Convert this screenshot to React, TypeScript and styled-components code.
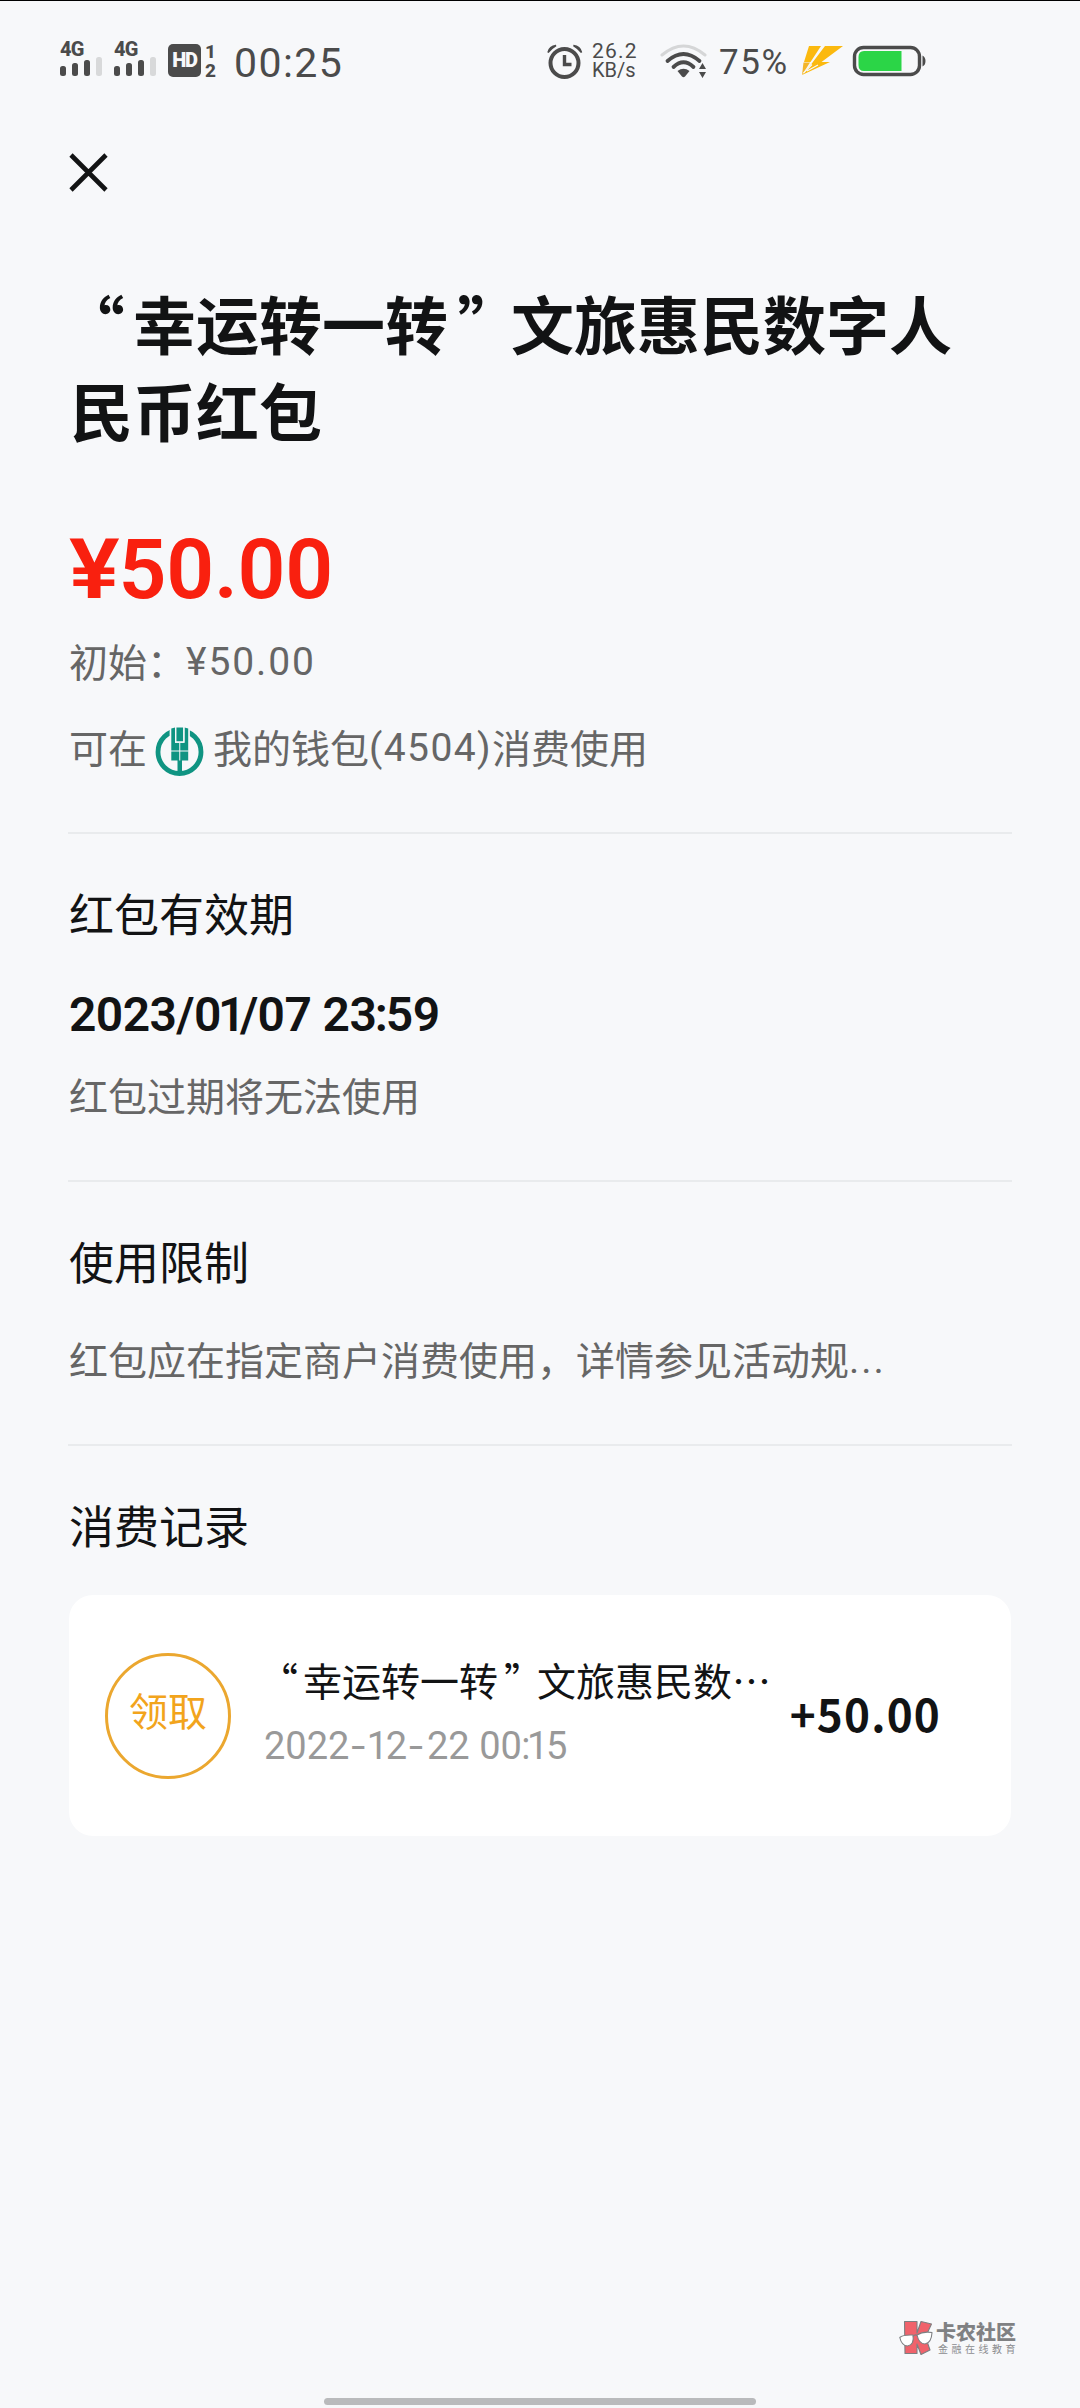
import React from "react";
import styled, { createGlobalStyle } from "styled-components";

const CJK = `"Noto Sans CJK SC", "Noto Sans", sans-serif`;
const MIXED = `Roboto, "Noto Sans CJK SC", sans-serif`;

const Global = createGlobalStyle`
  *, *::before, *::after { box-sizing: border-box; }
  body { margin: 0; background: #f7f8fa; }
`;

const Screen = styled.div`
  width: 1080px;
  height: 2408px;
  display: flex;
  flex-direction: column;
  background: #f7f8fa;
  border-top: 1px solid #000;
  font-family: ${CJK};
  color: #121314;
  white-space: nowrap;
  overflow: hidden;
`;

const StatusBar = styled.header`
  height: 124px;
  padding: 0 154px 0 60px;
  display: flex;
  justify-content: space-between;
  color: #4b4b4b;
  font-family: Roboto, sans-serif;
`;

const StatusGroup = styled.div`
  display: flex;
  align-items: flex-start;
  height: 100%;
`;

const Signal = styled.div`
  width: 54px;
  padding-top: 38px;
`;

const NetLabel = styled.div`
  font-size: 20px;
  line-height: 20px;
  font-weight: 800;
  letter-spacing: -0.8px;
`;

const Bars = styled.div`
  display: flex;
  align-items: flex-end;
  gap: 6px;
  height: 17px;
`;

const Bar = styled.i<{ $h: number; $dim?: boolean }>`
  width: 6px;
  height: ${(p) => p.$h}px;
  border-radius: 2.5px;
  background: ${(p) => (p.$dim ? "#d8d9da" : "#4b4b4b")};
`;

const HdBadge = styled.div`
  margin: 43px 0 0 0;
  width: 33px;
  height: 33px;
  border-radius: 5px;
  background: #4b4b4b;
  color: #f7f8fa;
  font-size: 20px;
  line-height: 33px;
  font-weight: 900;
  letter-spacing: -1.2px;
  text-align: center;
`;

const SimStack = styled.div`
  margin: 41px 0 0 3px;
  width: 13px;
  font-size: 19px;
  line-height: 19px;
  font-weight: 800;
  text-align: center;
`;

const Clock = styled.div`
  margin: 38px 0 0 17px;
  font-size: 41px;
  line-height: 48px;
  letter-spacing: 1.4px;
`;

const Speed = styled.div`
  margin: 41px 0 0 9px;
  width: 47px;
  font-size: 20px;
  line-height: 19px;
`;

const SpeedValue = styled.div`
  font-size: 21px;
  letter-spacing: 1.2px;
`;

const Percent = styled.div`
  margin: 38px 0 0 11px;
  width: 73px;
  font-size: 35px;
  line-height: 48px;
  letter-spacing: 1.6px;
`;

const AlarmSvg = styled.svg`
  margin-top: 42px;
`;
const WifiSvg = styled.svg`
  margin: 42px 0 0 21px;
`;
const BoltSvg = styled.svg`
  margin: 44px 0 0 9px;
`;
const BatterySvg = styled.svg`
  margin: 44px 0 0 9px;
`;

const CloseButton = styled.button`
  width: 40px;
  height: 40px;
  margin: 27px 0 0 68px;
  padding: 0;
  border: 0;
  background: none;
  display: flex;
  align-items: center;
  justify-content: center;
`;

const Main = styled.main`
  margin: 86px 68px 0;
  display: flex;
  flex-direction: column;
`;

const Title = styled.h1`
  margin: 0;
  padding-left: 2px;
  width: 920px;
  font-size: 63px;
  line-height: 87px;
  font-weight: 700;
  white-space: pre-line;
`;

const Glyph = styled.span<{ $left: number; $right: number }>`
  margin-left: ${(p) => p.$left}em;
  margin-right: ${(p) => p.$right}em;
`;

const Amount = styled.div`
  margin-top: 69px;
  height: 98px;
  font-family: ${MIXED};
  font-size: 84px;
  line-height: 98px;
  font-weight: 600;
  letter-spacing: -0.3px;
  color: #f9200f;
`;

const Yen = styled.span`
  display: inline-block;
  margin: 0 5px 0 1px;
  transform: scaleX(1.13);
  transform-origin: 0 50%;
`;

const Line = styled.div<{ $top?: number }>`
  display: flex;
  align-items: center;
  height: 56px;
  margin-top: ${(p) => p.$top ?? 0}px;
  padding-left: 1px;
  font-size: 39px;
  line-height: 56px;
  color: #666;
`;

const Num = styled.span<{ $ls?: number }>`
  padding-top: 4px;
  font-family: ${MIXED};
  letter-spacing: ${(p) => p.$ls ?? 1.4}px;
`;

const BankLogo = styled.svg`
  flex: none;
  margin: 11px 9px 0 8px;
`;

const Section = styled.section<{ $top: number; $height: number }>`
  margin-top: ${(p) => p.$top}px;
  height: ${(p) => p.$height}px;
  border-top: 2px solid #e9ebed;
  padding-top: 48px;
`;

const Heading = styled.h2`
  margin: 0;
  padding-left: 1px;
  font-size: 45px;
  line-height: 62px;
  font-weight: 400;
`;

const Expiry = styled.div`
  margin-top: 43px;
  padding-left: 1px;
  height: 56px;
  font-family: ${MIXED};
  font-size: 48px;
  line-height: 56px;
  font-weight: 600;
  letter-spacing: -0.6px;
`;

const Card = styled.article`
  margin: 39px 0 0 1px;
  width: 942px;
  height: 241px;
  border-radius: 24px;
  background: #fff;
  padding: 0 70px 0 36px;
  display: flex;
  align-items: center;
`;

const Badge = styled.div`
  flex: none;
  width: 126px;
  height: 126px;
  border: 3px solid #eba72f;
  border-radius: 50%;
  color: #f2a41c;
  font-size: 39px;
  line-height: 106px;
  text-align: center;
`;

const Entry = styled.div`
  margin-left: 33px;
  height: 126px;
  width: 510px;
`;

const EntryTitle = styled.div`
  margin-top: -2px;
  font-size: 39px;
  line-height: 56px;
`;

const EntryDate = styled.div`
  margin-top: 10px;
  font-family: ${MIXED};
  font-size: 38px;
  line-height: 56px;
  color: #999;
`;

const Dash = styled.span`
  font-family: Inter, sans-serif;
  letter-spacing: 2.4px;
`;

const Delta = styled.div`
  margin: -5px 0 0 auto;
  font-size: 44px;
  line-height: 60px;
  font-weight: 700;
  letter-spacing: 1.2px;
`;

const Footer = styled.footer`
  margin-top: auto;
  display: flex;
  flex-direction: column;
  align-items: center;
`;

const Watermark = styled.div`
  align-self: flex-end;
  margin-right: 61px;
  display: flex;
  align-items: flex-start;
  gap: 3px;
  height: 38px;
`;

const WatermarkText = styled.div`
  width: 83px;
`;

const Brand = styled.div`
  font-size: 20px;
  line-height: 23px;
  font-weight: 900;
  color: #808183;
`;

const Tagline = styled.div`
  padding-left: 2px;
  font-size: 10px;
  line-height: 11px;
  letter-spacing: 3.5px;
  color: #8c8d90;
`;

const HomeBar = styled.div`
  width: 432px;
  height: 7px;
  margin: 40px 0 3px;
  border-radius: 4px;
  background: #b9babc;
`;

const SignalIcon = () => (
  <Signal>
    <NetLabel>4G</NetLabel>
    <Bars>
      <Bar $h={10} />
      <Bar $h={13} />
      <Bar $h={16} />
      <Bar $h={19} $dim />
    </Bars>
  </Signal>
);

const Alarm = () => (
  <AlarmSvg width="36" height="38" viewBox="0 0 36 38" fill="none" stroke="#4b4b4b">
    <circle cx="17.5" cy="20" r="14" strokeWidth="4" />
    <path d="M17.5 12v9.500h7" strokeWidth="3.4" />
    <path d="M1 9.500Q2.500 3 9 2.500Q4 5.500 1 9.500ZM34.500 9.500Q33 3 26.500 2.500Q31.500 5.500 34.500 9.500Z" fill="#4b4b4b" strokeWidth="1.500" />
  </AlarmSvg>
);

const Wifi = () => (
  <WifiSvg width="48" height="36" viewBox="0 0 48 36" fill="none" strokeLinecap="round">
    <path d="M2 12Q23.500-6 45 12" stroke="#d5d6d7" strokeWidth="3" />
    <path d="M7.500 18Q23.500 4 39.500 18" stroke="#4b4b4b" strokeWidth="3.800" />
    <path d="M13.500 24Q23.500 14.500 33.500 24" stroke="#4b4b4b" strokeWidth="3.800" />
    <path d="M17.500 28Q23.500 23.500 29.500 28L25 33.500Q23.500 35 22 33.500Z" fill="#4b4b4b" />
    <path d="M39 26l3.500-6 3.500 6ZM39 29l3.500 6 3.500-6Z" fill="#4b4b4b" />
  </WifiSvg>
);

const Bolt = () => (
  <BoltSvg width="42" height="31" viewBox="0 0 42 31">
    <path d="M8 1H20L9.500 17H3Z" fill="#fbb90f" />
    <path d="M24 1H42L20.500 17H29L1 30L10 19.500Z" fill="#fbb90f" />
    <path d="M2.500 17.500H9L1 30Z" fill="#f3b52a" />
    <path d="M2.500 28L11 19.500M6 26L17 20" stroke="#f7f8fa" strokeWidth="1.200" fill="none" />
  </BoltSvg>
);

const Battery = () => (
  <BatterySvg width="74" height="32" viewBox="0 0 74 32">
    <rect x="2.500" y="2.500" width="65" height="27" rx="9" fill="none" stroke="#4b4b4b" strokeWidth="3.400" />
    <path d="M49.500 6V26H12Q6.500 26 6.500 20V12Q6.500 6 12 6Z" fill="#2bd547" />
    <path d="M70.500 10.500Q73.500 12 73.500 16T70.500 21.500Z" fill="#4b4b4b" />
  </BatterySvg>
);

const Bank = () => (
  <BankLogo width="49" height="52" viewBox="0 0 49 52">
    <circle cx="24.500" cy="26" r="21.500" fill="none" stroke="#0f9482" strokeWidth="4.800" />
    <path d="M14.600 0H34.900V16H14.600Z" fill="#f7f8fa" />
    <path d="M16.300 2.500L20 1.500V16.800H29.500V1.500L33.200 2.500V34.500H27V49H22.500V34.500H16.300Z" fill="#0f9482" />
    <path d="M21.300 1.500H28.200V15.500H21.300Z" fill="#0f9482" />
    <path d="M16 25H33.500M24.750 17V34.500" stroke="#f7f8fa" strokeWidth="1" fill="none" />
    <path d="M20.600 1V16.200H28.900V1" stroke="#f7f8fa" strokeWidth="1.200" fill="none" />
  </BankLogo>
);

const KLogo = () => (
  <svg width="34" height="37" viewBox="0 0 34 37">
    <g stroke="#7d7f82" strokeWidth="1.100" strokeLinejoin="round">
      <path d="M5.500 1.500H18V13L22 1.500L32.500 4L26.500 17L31 30L22 34.500L18 24V33.500H6Z" fill="#f0626b" />
      <path d="M.8 17.500Q4 14.500 14 15Q15.500 25 8.500 26Q2.500 25.500.8 17.500Z" fill="#fff" />
      <path d="M18 15Q24 11 33 12.500Q32.500 23 26 24Q20 24 18 15Z" fill="#fff" />
      <path d="M14 16.500Q16 14 18 15.500" fill="none" />
    </g>
  </svg>
);

const Quoted = ({ children }: { children: React.ReactNode }) => (
  <>
    <Glyph $left={-0.13} $right={0.13}>“</Glyph>
    {children}
    <Glyph $left={0.15} $right={-0.15}>”</Glyph>
  </>
);

export default function App() {
  return (
    <Screen lang="zh-CN">
      <Global />
      <StatusBar>
        <StatusGroup>
          <SignalIcon />
          <SignalIcon />
          <HdBadge>HD</HdBadge>
          <SimStack>
            <div>1</div>
            <div>2</div>
          </SimStack>
          <Clock>00:25</Clock>
        </StatusGroup>
        <StatusGroup>
          <Alarm />
          <Speed>
            <SpeedValue>26.2</SpeedValue>
            <div>KB/s</div>
          </Speed>
          <Wifi />
          <Percent>75%</Percent>
          <Bolt />
          <Battery />
        </StatusGroup>
      </StatusBar>

      <CloseButton aria-label="关闭">
        <svg width="40" height="40" viewBox="0 0 40 40" stroke="#121314" strokeWidth="4.600">
          <path d="M3 3L38 38M38 3L3 38" />
        </svg>
      </CloseButton>

      <Main>
        <Title>
          <Quoted>幸运转一转</Quoted>文旅惠民数字人
          <br />
          民币红包
        </Title>
        <Amount>
          <Yen>¥</Yen>50.00
        </Amount>
        <Line $top={13}>
          初始：<Num $ls={1.9}>¥50.00</Num>
        </Line>
        <Line $top={30}>
          可在
          <Bank />
          我的钱包<Num>(4504)</Num>消费使用
        </Line>

        <Section $top={58} $height={348}>
          <Heading>红包有效期</Heading>
          <Expiry>
            2023/0<Glyph $left={-0.06} $right={-0.1}>1</Glyph>/07 23
            <Glyph $left={-0.03} $right={-0.03}>:</Glyph>59
          </Expiry>
          <Line $top={23}>红包过期将无法使用</Line>
        </Section>

        <Section $top={0} $height={264}>
          <Heading>使用限制</Heading>
          <Line $top={38}>
            红包应在指定商户消费使用，详情参见活动规<Num $ls={2}>...</Num>
          </Line>
        </Section>

        <Section $top={0} $height={400}>
          <Heading>消费记录</Heading>
          <Card>
            <Badge>领取</Badge>
            <Entry>
              <EntryTitle>
                <Quoted>幸运转一转</Quoted>文旅惠民数…
              </EntryTitle>
              <EntryDate>
                2022<Dash>-</Dash>
                <Glyph $left={-0.07} $right={-0.06}>1</Glyph>2<Dash>-</Dash>22 00
                <Glyph $left={-0.02} $right={-0.02}>:</Glyph>
                <Glyph $left={-0.07} $right={-0.06}>1</Glyph>5
              </EntryDate>
            </Entry>
            <Delta>+50.00</Delta>
          </Card>
        </Section>
      </Main>

      <Footer>
        <Watermark>
          <KLogo />
          <WatermarkText>
            <Brand>卡农社区</Brand>
            <Tagline>金融在线教育</Tagline>
          </WatermarkText>
        </Watermark>
        <HomeBar />
      </Footer>
    </Screen>
  );
}
